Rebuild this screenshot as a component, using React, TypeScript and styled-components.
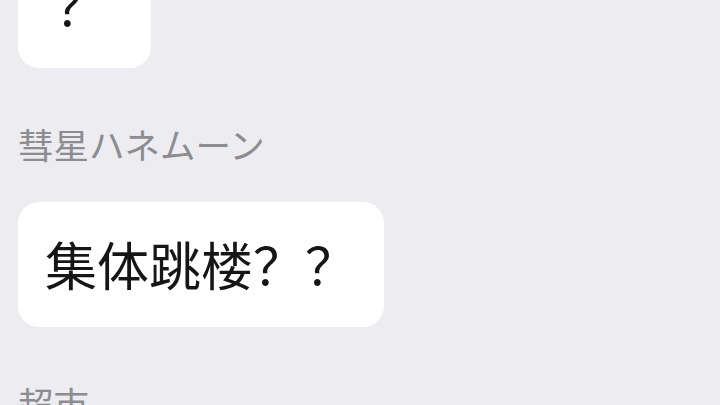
import { styled, createGlobalStyle } from 'styled-components';

const GlobalStyle = createGlobalStyle`
  html, body {
    margin: 0;
    padding: 0;
    background: #edecf1;
    overflow: hidden;
  }

  body {
    font-family: 'Noto Sans CJK SC', 'Noto Sans CJK JP', sans-serif;
  }
`;

// scrolled part-way through the conversation, so the first bubble is clipped
const ChatLog = styled.div`
  display: flex;
  flex-direction: column;
  gap: 55px;
  padding: 0 18px;
  margin-top: -57px;
  height: 462px;
  overflow: hidden;
`;

const MessageGroup = styled.div`
  display: flex;
  flex-direction: column;
  align-items: flex-start;
  gap: 37px;
`;

const SenderName = styled.div`
  font-family: 'Noto Sans CJK JP', 'Noto Sans CJK SC', sans-serif;
  font-size: 35.5px;
  line-height: 42px;
  color: #8c8c91;
`;

const Bubble = styled.div<{ $minWidth?: number; $indent?: number }>`
  background: #ffffff;
  border-radius: 21px;
  padding: 29px 27px 30px ${(p) => 27 + (p.$indent ?? 0)}px;
  min-width: ${(p) => (p.$minWidth ? `${p.$minWidth}px` : 'auto')};
  box-sizing: border-box;
  font-size: 52px;
  line-height: 66px;
  color: #161616;
  white-space: nowrap;
`;

type Message = {
  sender?: string;
  text: string;
  minWidth?: number;
  indent?: number;
};

const messages: Message[] = [
  { text: '？', minWidth: 133, indent: 10 },
  { sender: '彗星ハネムーン', text: '集体跳楼？？' },
  { sender: '超市', text: '' },
];

export default function App() {
  return (
    <>
      <GlobalStyle />
      <ChatLog>
        {messages.map((m, i) => (
          <MessageGroup key={i}>
            {m.sender && <SenderName>{m.sender}</SenderName>}
            {m.text && (
              <Bubble $minWidth={m.minWidth} $indent={m.indent}>
                {m.text}
              </Bubble>
            )}
          </MessageGroup>
        ))}
      </ChatLog>
    </>
  );
}
